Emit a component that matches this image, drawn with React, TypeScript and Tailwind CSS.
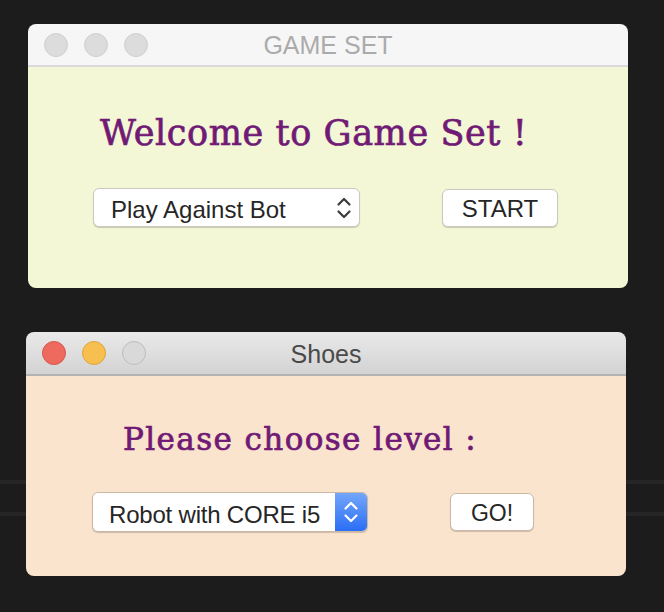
import React from 'react';

type Light = 'idle' | 'active';

const TrafficLights: React.FC<{ mode: Light }> = ({ mode }) => {
  const colors =
    mode === 'active'
      ? ['bg-[#ee6a5f] border-[#d9564b]', 'bg-[#f6bf50] border-[#dea53a]', 'bg-[#d9d9d9] border-[#bdbdbd]']
      : ['bg-[#dcdcdc] border-[#d0d0d0]', 'bg-[#dcdcdc] border-[#d0d0d0]', 'bg-[#dcdcdc] border-[#d0d0d0]'];
  return (
    <div className="flex items-center gap-4">
      {colors.map((c, i) => (
        <span key={i} className={`w-6 h-6 rounded-full border ${c}`} />
      ))}
    </div>
  );
};

const Chevrons: React.FC<{ color: string }> = ({ color }) => (
  <svg width="16" height="24" viewBox="0 0 16 24" fill="none" stroke={color} strokeWidth="2.2" strokeLinecap="round" strokeLinejoin="round">
    <path d="M2.5 8.5 L8 3 L13.5 8.5" />
    <path d="M2.5 15.5 L8 21 L13.5 15.5" />
  </svg>
);

const App: React.FC = () => {
  return (
    <div
      className="w-full h-[612px] overflow-hidden bg-[#1c1c1c] bg-[linear-gradient(to_bottom,transparent_480px,#262626_480px,#262626_484px,transparent_484px,transparent_512px,#262626_512px,#262626_516px,transparent_516px)] flex flex-col font-['Liberation_Sans',Arial,sans-serif]"
    >
      {/* Window 1 */}
      <div className="ml-[28px] mt-[24px] w-[600px] rounded-[8px] overflow-hidden flex flex-col">
        <div className="h-[43px] bg-[#f6f6f6] border-b-2 border-[#dadada] grid grid-cols-[1fr_auto_1fr] items-center px-4">
          <TrafficLights mode="idle" />
          <span className="text-[25px] leading-none pt-[2px] text-[#ababab]">GAME SET</span>
          <span />
        </div>
        <div className="h-[221px] bg-[#f3f7d5] flex flex-col">
          <h1 className="mt-[46px] pl-[72px] text-[35px] leading-[40px] text-[#701a75] font-['DejaVu_Serif',serif] tracking-[0.6px] [-webkit-text-stroke:0.7px_#701a75]">
            Welcome to Game Set !
          </h1>
          <div className="mt-[35px] flex items-center">
            <div className="ml-[65px] w-[267px] h-[39px] bg-white rounded-[6px] border border-[#c9c9bf] shadow-[0_1px_1px_rgba(0,0,0,0.18)] flex items-center justify-between pl-[17px] pr-[7px]">
              <span className="text-[24px] leading-none pt-[5px] text-[#262626]">Play Against Bot</span>
              <Chevrons color="#3a3a3a" />
            </div>
            <button className="ml-[82px] w-[116px] h-[38px] bg-white rounded-[6px] border border-[#c9c9bf] shadow-[0_1px_1px_rgba(0,0,0,0.18)] text-[24px] leading-none pt-[3px] text-[#262626]">
              START
            </button>
          </div>
        </div>
      </div>

      {/* Window 2 */}
      <div className="ml-[26px] mt-[44px] w-[600px] rounded-[8px] overflow-hidden flex flex-col">
        <div className="h-[44px] bg-[linear-gradient(to_bottom,#e9e9e9,#d3d3d3)] border-b-2 border-[#b3b3b3] grid grid-cols-[1fr_auto_1fr] items-center px-4">
          <TrafficLights mode="active" />
          <span className="text-[25px] leading-none pt-[2px] text-[#4a4a4a]">Shoes</span>
          <span />
        </div>
        <div className="h-[200px] bg-[#fae4cd] flex flex-col">
          <h2 className="mt-[45px] pl-[97px] text-[31px] leading-[36px] text-[#701a75] font-['DejaVu_Serif',serif] tracking-[1.4px] [-webkit-text-stroke:0.7px_#701a75]">
            Please choose level :
          </h2>
          <div className="mt-[35px] flex items-center">
            <div className="ml-[66px] w-[276px] h-[40px] bg-white rounded-[6px] border border-[#cbb9a6] shadow-[0_1px_1px_rgba(0,0,0,0.18)] flex items-stretch overflow-hidden">
              <span className="flex-1 flex items-center pl-[16px] pt-[5px] text-[24px] leading-none text-[#262626] tracking-[-0.2px]">Robot with CORE i5</span>
              <span className="w-[32px] bg-[linear-gradient(to_bottom,#73a7f9,#2a6ef6)] flex items-center justify-center">
                <Chevrons color="#ffffff" />
              </span>
            </div>
            <button className="ml-[82px] w-[84px] h-[38px] bg-white rounded-[6px] border border-[#cbb9a6] shadow-[0_1px_1px_rgba(0,0,0,0.18)] text-[23px] leading-none pt-[3px] text-[#262626]">
              GO!
            </button>
          </div>
        </div>
      </div>
    </div>
  );
};

export default App;
